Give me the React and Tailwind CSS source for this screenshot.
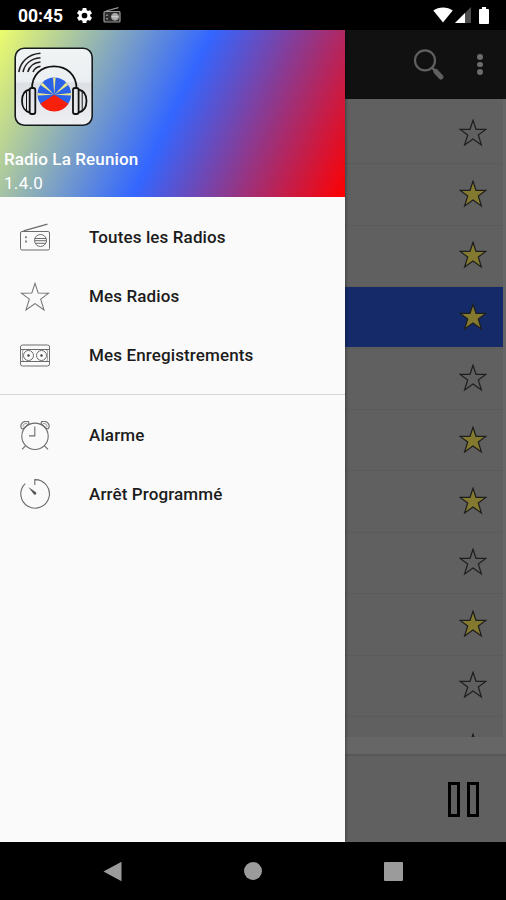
import React from 'react';

const STAR = 'M14 1.2 L17 10.3 L26.8 10.4 L19.3 16 L22.4 26 L14 20.1 L5.6 26 L8.7 16 L1.2 10.4 L11 10.3 Z';

const RadioIcon = () => (
    <svg className="h-[30px] w-[30px]" viewBox="0 0 30 30" fill="none" stroke="#6c6c6c" strokeWidth="1">
        <rect x="0.5" y="8.5" width="29" height="18.5" rx="1.5" />
        <path d="M3.5 7.8 L27.5 1.2" strokeWidth="1.2" />
        <circle cx="20.5" cy="17.5" r="6" />
        <path d="M14.7 15.5h11.6M14.5 17.7h12M15 20.3h11" />
        <path d="M6 13.2v2M6 17.5v2" strokeWidth="1.6" />
    </svg>
);

const StarIcon = () => (
    <svg className="h-[30px] w-[30px]" viewBox="0 0 28 28" fill="none" stroke="#707070" strokeWidth="0.95">
        <path d={STAR} />
    </svg>
);

const CassetteIcon = () => (
    <svg className="h-[30px] w-[30px]" viewBox="0 0 30 30" fill="none" stroke="#6c6c6c" strokeWidth="1">
        <rect x="0.5" y="4" width="29" height="21" rx="2" />
        <path d="M1 8.5h28M1 20.5h28" />
        <rect x="2.5" y="8.5" width="25" height="12" rx="2" strokeWidth="0.6" />
        <circle cx="8.5" cy="14.5" r="5" />
        <circle cx="21.5" cy="14.5" r="5" />
        <circle cx="8.5" cy="14.5" r="1" fill="#444" />
        <circle cx="21.5" cy="14.5" r="1" fill="#444" />
    </svg>
);

const AlarmIcon = () => (
    <svg className="h-[30px] w-[30px]" viewBox="0 0 30 30" fill="none" stroke="#6c6c6c" strokeWidth="1.1">
        <circle cx="15" cy="15.3" r="13.2" />
        <path d="M14.8 5.5v9.4H9" />
        <path d="M5.5 24.8 L2 28.4M24.5 24.8 L28 28.4" />
        <path d="M1.5 7.5 C-0.5 3.5 2.5 -0.8 8.5 0.6 L9 2.5 L3 7.9 Z" />
        <path d="M28.5 7.5 C30.5 3.5 27.5 -0.8 21.5 0.6 L21 2.5 L27 7.9 Z" />
        <path d="M3 5.7 C3 3.2 4.5 2.3 7 2.3M27 5.7 C27 3.2 25.5 2.3 23 2.3" strokeWidth="0.7" />
    </svg>
);

const TimerIcon = () => (
    <svg className="mb-px h-[30px] w-[30px]" viewBox="0 0 30 30" fill="none" stroke="#6c6c6c" strokeWidth="1.1">
        <path d="M14.8 6V0.6A14.3 14.3 0 1 1 5.2 4.6" />
        <path d="M8.3 8 L16.2 13.5 Q16.8 16.2 14 15.6 Z" fill="#555" stroke="none" />
    </svg>
);

const RowStar = ({ filled }) => (
    <svg className="h-7 w-7" viewBox="0 0 28 28">
        <path d={STAR} fill={filled ? '#83792f' : 'none'} stroke="#1e1e1e" strokeWidth="1.2" />
    </svg>
);

const Logo = () => (
    <svg className="h-20 w-20" viewBox="0 0 80 80" fill="none">
        <defs>
            <linearGradient id="logoBg" x1="0" y1="0" x2="0" y2="1">
                <stop offset="0" stopColor="#f1f4f5" />
                <stop offset="0.43" stopColor="#eceff1" />
                <stop offset="0.46" stopColor="#dce0e5" />
                <stop offset="1" stopColor="#eff0f2" />
            </linearGradient>
        </defs>
        <rect x="1.2" y="1.2" width="77" height="77" rx="9" fill="url(#logoBg)" stroke="#151a1c" strokeWidth="1.6" />
        <g stroke="#222" strokeWidth="1.6">
            <path d="M4.8 25 C6.5 15 14 7.2 26.5 6.3" />
            <path d="M9 25 C10.5 18 16 11.6 26.5 10.8" />
            <path d="M13.8 25 C15 20.5 19 15.8 26.5 15" />
            <path d="M19 25 C20 22.5 22.5 20 26.5 19.3" />
        </g>
        <circle cx="40.3" cy="47.3" r="16.8" fill="#2b62e8" />
        <path d="M40.3 47.8 L26.2 56.8 A16.8 16.8 0 0 0 54.4 56.8 Z" fill="#f7200c" />
        <g fill="#e8e58a">
            <path d="M40.3 47.8 L39 30.5h2.6Z" />
            <path d="M40.3 47.8 L26.5 38 L28.5 35.6Z" />
            <path d="M40.3 47.8 L54.1 38 L52.1 35.6Z" />
            <path d="M40.3 47.8 L23.5 46 V48.6Z" />
            <path d="M40.3 47.8 L57.1 46 V48.6Z" />
        </g>
        <g stroke="#111" strokeWidth="1.8">
            <path d="M18 41.5 C18 28 27 19.3 40 19.3 C53 19.3 62.5 28 62.5 41.5" />
            <path d="M15.5 42.5 C10.5 43.5 8 48 8 54 C8 60 11 64.5 15.5 65.5" />
            <path d="M64.5 42.5 C69.5 43.5 72.5 48 72.5 54 C72.5 60 69.5 64.5 64.5 65.5" />
            <rect x="15.7" y="41" width="5.6" height="26" rx="2" />
            <rect x="59" y="41" width="5.6" height="26" rx="2" />
            <path d="M12.5 44.5v19M68.2 44.5v19" strokeWidth="1" />
        </g>
    </svg>
);

const mainItems = [
    { label: 'Toutes les Radios', icon: RadioIcon },
    { label: 'Mes Radios', icon: StarIcon },
    { label: 'Mes Enregistrements', icon: CassetteIcon },
];

const toolItems = [
    { label: 'Alarme', icon: AlarmIcon },
    { label: 'Arrêt Programmé', icon: TimerIcon },
];

const stations = [
    { favorite: false },
    { favorite: true },
    { favorite: true },
    { favorite: true, selected: true },
    { favorite: false },
    { favorite: true },
    { favorite: true },
    { favorite: false },
    { favorite: true },
    { favorite: false },
    { favorite: false },
];

const MenuItem = ({ item }) => (
    <li className="flex h-[59px] items-center pl-5 text-[17px] font-medium tracking-[0.12px] text-[#1c1c1c]">
        <item.icon />
        <span className="ml-[39px] pt-px">{item.label}</span>
    </li>
);

const StatusBar = () => (
    <div className="flex h-[30px] shrink-0 items-center bg-black pr-[17px] pl-[18px] text-white">
        <span className="mt-[3px] text-[17.5px] leading-none font-bold">00:45</span>
        <svg className="mt-px ml-[12px] h-[19px] w-[19px]" viewBox="0 0 24 24" fill="#fff">
            <path d="M19.14 12.94c.04-.3.06-.61.06-.94s-.02-.64-.07-.94l2.03-1.58a.49.49 0 0 0 .12-.61l-1.92-3.32a.49.49 0 0 0-.59-.22l-2.39.96a7 7 0 0 0-1.62-.94l-.36-2.54A.48.48 0 0 0 13.92 2.4h-3.84a.48.48 0 0 0-.47.41l-.36 2.54c-.59.24-1.13.57-1.62.94l-2.39-.96a.48.48 0 0 0-.59.22L2.74 8.87a.48.48 0 0 0 .12.61l2.03 1.58a7 7 0 0 0 0 1.88l-2.03 1.58a.49.49 0 0 0-.12.61l1.92 3.32c.12.22.37.29.59.22l2.39-.96c.5.38 1.03.7 1.62.94l.36 2.54c.05.24.24.41.48.41h3.84c.24 0 .44-.17.47-.41l.36-2.54a7 7 0 0 0 1.62-.94l2.39.96c.22.08.47 0 .59-.22l1.92-3.32a.48.48 0 0 0-.12-.61zM12 15.6a3.6 3.6 0 1 1 0-7.2 3.6 3.6 0 0 1 0 7.2" />
        </svg>
        <svg className="mt-px ml-[9px] h-[18px] w-[18px]" viewBox="0 0 18 18" fill="none" stroke="#9a9a9a">
            <rect x="1" y="4.5" width="16" height="10.5" rx="1" fill="#2c2c2c" strokeWidth="1.2" />
            <path d="M3 4 L15.5 0.7" strokeWidth="1.2" />
            <circle cx="12" cy="9.8" r="3.5" fill="#aaa" />
            <path d="M4 7.5v1.5M4 11v1.5M8.5 9.8h7" stroke="#ddd" />
        </svg>
        <svg className="ml-auto h-[16px] w-[20px]" viewBox="0 0 20 16">
            <path d="M0.3 3.6 C5.5 -0.4 14.5 -0.4 19.7 3.6 L10 15.5 Z" fill="#fff" />
        </svg>
        <svg className="ml-[2px] h-[16px] w-[16px]" viewBox="0 0 16 16">
            <path d="M0 16 L16 0 V16 Z" fill="#4d4d4d" />
            <path d="M0 16 L10 6 V16 Z" fill="#fff" />
        </svg>
        <svg className="ml-[8px] h-[17px] w-[10px]" viewBox="0 0 11 18" preserveAspectRatio="none">
            <path d="M3.2 0h4.6v2H10a1 1 0 0 1 1 1v14a1 1 0 0 1-1 1H1a1 1 0 0 1-1-1V3a1 1 0 0 1 1-1h2.2Z" fill="#fff" />
        </svg>
    </div>
);

const Drawer = () => (
    <aside className="absolute inset-y-0 left-0 w-[345px] bg-[#fafafa] shadow-[1px_0_3px_rgba(0,0,0,0.35)]">
        <div className="h-[167px] bg-[linear-gradient(115.8deg,#ecfc6c_0%,#3366ff_50%,#ff0000_100%)] pt-[17px] text-white">
            <div className="ml-[14px]">
                <Logo />
            </div>
            <p className="mt-[20px] ml-1 text-[17px] leading-[24px] font-medium tracking-[0.12px]">Radio La Reunion</p>
            <p className="ml-1 text-[17px] leading-[24px] tracking-[0.3px]">1.4.0</p>
        </div>
        <ul className="pt-[11px]">
            {mainItems.map((item) => (
                <MenuItem key={item.label} item={item} />
            ))}
        </ul>
        <ul className="mt-[9px] border-t border-[#d6d6d6] pt-[11px]">
            {toolItems.map((item) => (
                <MenuItem key={item.label} item={item} />
            ))}
        </ul>
    </aside>
);

export default function App() {
    return (
        <div className="flex h-[900px] w-[506px] flex-col overflow-hidden bg-black font-['Roboto',sans-serif]">
            <StatusBar />

            <div className="relative flex h-[812px] shrink-0 flex-col bg-[#666666]">
                <header className="flex h-[69px] shrink-0 items-center justify-end bg-[#111111] pr-[23.5px]">
                    <svg className="mr-[32px] h-[32px] w-[32px]" viewBox="0 0 32 32" fill="none" stroke="#606060">
                        <circle cx="12" cy="11.4" r="10" strokeWidth="2.2" />
                        <path d="M19 18.6 L22.5 22.2" strokeWidth="2.5" />
                        <path d="M22.8 22.5 L28 28" strokeWidth="5" strokeLinecap="round" />
                    </svg>
                    <div className="flex flex-col gap-[2px]">
                        <span className="h-[5.5px] w-[5.5px] rounded-full bg-[#6c6c6c]" />
                        <span className="h-[5.5px] w-[5.5px] rounded-full bg-[#6c6c6c]" />
                        <span className="h-[5.5px] w-[5.5px] rounded-full bg-[#6c6c6c]" />
                    </div>
                </header>

                {/* Station list */}
                <ul className="mr-[3px] h-[638px] shrink-0 overflow-hidden bg-[#606060] pt-[3px]">
                    {stations.map((station, idx) => (
                        <li key={idx} className="h-[61.4px] border-t border-[#5b5b5b] pb-px first:border-transparent">
                            <div
                                className={
                                    station.selected
                                        ? 'flex h-full items-center justify-end bg-[#152b69] pr-4'
                                        : 'flex h-full items-center justify-end pr-4'
                                }
                            >
                                <RowStar filled={station.favorite} />
                            </div>
                        </li>
                    ))}
                </ul>

                {/* Player */}
                <div className="mt-auto flex h-[88px] shrink-0 items-center justify-end gap-[7px] border-t-2 border-[#585858] bg-[#606060] pr-[27px]">
                    <span className="h-[35px] w-[12px] border-[3px] border-black" />
                    <span className="h-[35px] w-[12px] border-[3px] border-black" />
                </div>

                <Drawer />
            </div>

            {/* Navigation keys */}
            <nav className="flex h-[58px] items-center justify-between bg-black pr-[103px] pl-[103px]">
                <svg className="h-[21px] w-[19px]" viewBox="0 0 19 21" fill="#9b9b9b">
                    <path d="M18.5 0.8 V20.2 L0.5 10.5 Z" />
                </svg>
                <span className="h-[18px] w-[18px] rounded-full bg-[#9b9b9b]" />
                <span className="h-[19px] w-[19px] rounded-[1px] bg-[#9b9b9b]" />
            </nav>
        </div>
    );
}
